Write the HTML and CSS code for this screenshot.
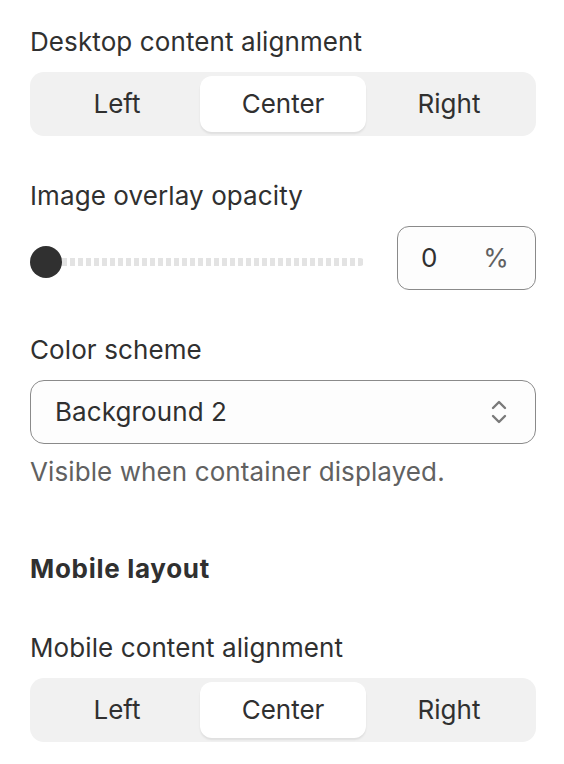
FILE: index.html
```html
<!DOCTYPE html>
<html lang="en">
<head>
  <meta charset="UTF-8">
  <title>Section settings</title>
  <link rel="stylesheet" href="styles.css">
</head>
<body>

  <div class="field first">
    <div class="label">Desktop content alignment</div>
    <div class="segmented">
      <button class="seg">Left</button>
      <button class="seg active">Center</button>
      <button class="seg">Right</button>
    </div>
  </div>

  <div class="field">
    <div class="label">Image overlay opacity</div>
    <div class="range-row">
      <div class="slider">
        <span class="thumb"></span>
        <span class="track"></span>
      </div>
      <div class="number-box">
        <span class="num">0</span>
        <span class="suffix">%</span>
      </div>
    </div>
  </div>

  <div class="field">
    <div class="label">Color scheme</div>
    <div class="select">
      <span>Background 2</span>
      <svg class="chevrons" width="16" height="26" viewBox="0 0 16 26" fill="none" stroke="#7a7a7a" stroke-width="2.4" stroke-linecap="round" stroke-linejoin="round">
        <path d="M2 9 L8 3 L14 9"/>
        <path d="M2 17 L8 23 L14 17"/>
      </svg>
    </div>
    <div class="help">Visible when container displayed.</div>
  </div>

  <h3 class="heading">Mobile layout</h3>

  <div class="field">
    <div class="label">Mobile content alignment</div>
    <div class="segmented">
      <button class="seg">Left</button>
      <button class="seg active">Center</button>
      <button class="seg">Right</button>
    </div>
  </div>

</body>
</html>
```

FILE: styles.css
```css
body {
  margin: 0;
  padding: 22px 28px 0 30px;
  font-family: "Inter", "Noto Sans", sans-serif;
  font-size: 26px;
  line-height: 40px;
  color: #303030;
  background: #fff;
  letter-spacing: 0.1px;
}
.field {
  margin-top: 40px;
}
.field.first {
  margin-top: 0;
}
.label {
  margin-bottom: 10px;
}
.segmented {
  display: grid;
  grid-template-columns: repeat(3, 1fr);
  padding: 4px;
  height: 56px;
  background: #f1f1f1;
  border-radius: 14px;
}
.seg {
  border: none;
  background: transparent;
  font: inherit;
  color: #303030;
  border-radius: 12px;
  padding: 0;
}
.seg.active {
  background: #fff;
  box-shadow: 0 2px 2px rgba(0, 0, 0, 0.08);
}
.range-row {
  display: flex;
  align-items: center;
  height: 64px;
}
.slider {
  flex: 1;
  display: flex;
  align-items: center;
  margin-top: 8px;
  margin-right: 33px;
}
.thumb {
  width: 32px;
  height: 32px;
  border-radius: 50%;
  background: #303030;
  flex: none;
}
.track {
  flex: 1;
  height: 8px;
  border-radius: 0 4px 4px 0;
  background: repeating-linear-gradient(90deg, #e3e3e3 0 5px, transparent 5px 8px);
}
.number-box {
  width: 139px;
  height: 64px;
  box-sizing: border-box;
  border: 1px solid #8a8a8a;
  border-radius: 12px;
  background: #fdfdfd;
  display: flex;
  align-items: center;
  justify-content: space-between;
  padding: 0 26px 0 23px;
}
.suffix {
  color: #616161;
}
.select {
  height: 64px;
  box-sizing: border-box;
  border: 1px solid #8a8a8a;
  border-radius: 14px;
  background: #fdfdfd;
  display: flex;
  align-items: center;
  justify-content: space-between;
  padding: 0 28px 0 24px;
}
.help {
  margin-top: 8px;
  color: #616161;
}
.heading {
  margin: 57px 0 0;
  font-size: 26px;
  line-height: 40px;
  font-weight: 700;
  letter-spacing: 0.7px;
}
.heading + .field {
  margin-top: 39px;
}
```
